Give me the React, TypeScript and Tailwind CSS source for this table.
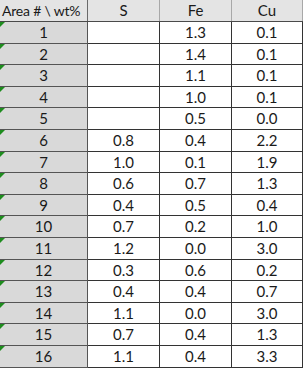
const rows = [
  { id: '1', s: '', fe: '1.3', cu: '0.1', h: 'h-[22px]' },
  { id: '2', s: '', fe: '1.4', cu: '0.1', h: 'h-[21px]' },
  { id: '3', s: '', fe: '1.1', cu: '0.1', h: 'h-[22px]' },
  { id: '4', s: '', fe: '1.0', cu: '0.1', h: 'h-[21px]' },
  { id: '5', s: '', fe: '0.5', cu: '0.0', h: 'h-[22px]' },
  { id: '6', s: '0.8', fe: '0.4', cu: '2.2', h: 'h-[22px]' },
  { id: '7', s: '1.0', fe: '0.1', cu: '1.9', h: 'h-[21px]' },
  { id: '8', s: '0.6', fe: '0.7', cu: '1.3', h: 'h-[22px]' },
  { id: '9', s: '0.4', fe: '0.5', cu: '0.4', h: 'h-[21px]' },
  { id: '10', s: '0.7', fe: '0.2', cu: '1.0', h: 'h-[22px]' },
  { id: '11', s: '1.2', fe: '0.0', cu: '3.0', h: 'h-[22px]' },
  { id: '12', s: '0.3', fe: '0.6', cu: '0.2', h: 'h-[21px]' },
  { id: '13', s: '0.4', fe: '0.4', cu: '0.7', h: 'h-[22px]' },
  { id: '14', s: '1.1', fe: '0.0', cu: '3.0', h: 'h-[21px]' },
  { id: '15', s: '0.7', fe: '0.4', cu: '1.3', h: 'h-[22px]' },
  { id: '16', s: '1.1', fe: '0.4', cu: '3.3', h: 'h-[22px]' },
]

export default function App() {
  return (
    <div
      className="w-[304px] h-[370px] overflow-hidden bg-white text-[15px] leading-none text-[#1a1a1a]"
      style={{ fontFamily: 'Lato, "Open Sans", sans-serif' }}
    >
      {/* header */}
      <div className="flex h-[22px] w-[303px] border-b border-[#4a4a4a] bg-[#e4e4e4]">
        <div className="flex w-[88px] items-center whitespace-nowrap border-r border-[#6a6a6a] pl-[2px] text-[14px] tracking-[-0.2px]">
          Area # \ wt%
        </div>
        <div className="flex w-[72px] items-center justify-center border-r border-[#a8a8a8]">S</div>
        <div className="flex w-[72px] items-center justify-center border-r border-[#a8a8a8]">Fe</div>
        <div className="flex w-[71px] items-center justify-center border-r border-[#a8a8a8]">Cu</div>
      </div>

      {rows.map((r) => (
        <div key={r.id} className={`flex w-[303px] ${r.h}`}>
          <div className="relative flex w-[88px] items-center justify-center border-b border-r border-[#555] bg-[#d9d9d9]">
            <span className="absolute left-0 top-0 h-0 w-0 border-r-[5px] border-t-[5px] border-r-transparent border-t-[#1e8c1e]" />
            {r.id}
          </div>
          <div className="flex w-[72px] items-center justify-center border-b border-r border-[#333]">{r.s}</div>
          <div className="flex w-[72px] items-center justify-center border-b border-r border-[#333]">{r.fe}</div>
          <div className="flex w-[71px] items-center justify-center border-b border-r border-[#333]">{r.cu}</div>
        </div>
      ))}
    </div>
  )
}
